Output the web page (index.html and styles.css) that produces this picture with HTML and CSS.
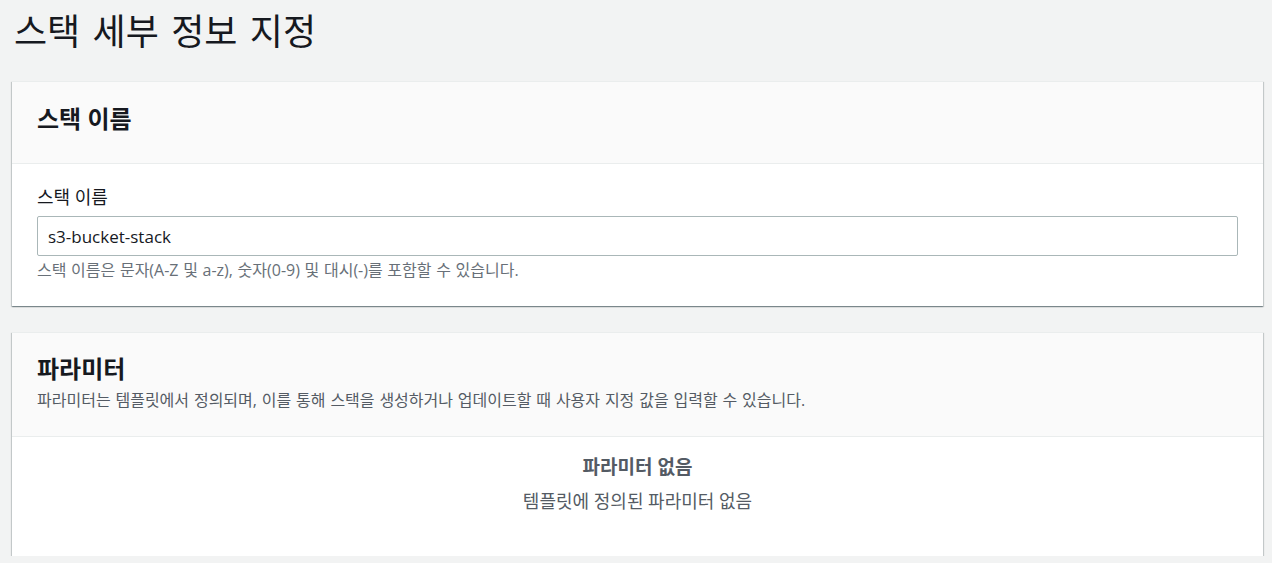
FILE: index.html
```html
<!DOCTYPE html>
<html lang="ko">
<head>
<meta charset="utf-8">
<title>스택 세부 정보 지정</title>
<link rel="stylesheet" href="styles.css">
</head>
<body>
<main class="page">
  <h1 class="page-title">스택 세부 정보 지정</h1>

  <div class="cards">
    <section class="card">
      <header class="card-header">
        <h2 class="card-title">스택 이름</h2>
      </header>
      <div class="card-body">
        <label class="field-label" for="stack-name">스택 이름</label>
        <input class="field-input" id="stack-name" type="text" value="s3-bucket-stack">
        <p class="field-help">스택 이름은 문자(A-Z 및 a-z), 숫자(0-9) 및 대시(-)를 포함할 수 있습니다.</p>
      </div>
    </section>

    <section class="card">
      <header class="card-header card-header--desc">
        <h2 class="card-title">파라미터</h2>
        <p class="card-desc">파라미터는 템플릿에서 정의되며, 이를 통해 스택을 생성하거나 업데이트할 때 사용자 지정 값을 입력할 수 있습니다.</p>
      </header>
      <div class="card-body card-body--empty">
        <p class="empty-title">파라미터 없음</p>
        <p class="empty-text">템플릿에 정의된 파라미터 없음</p>
      </div>
    </section>
  </div>
</main>
</body>
</html>
```

FILE: styles.css
```css
* { box-sizing: border-box; }

html, body {
  margin: 0;
  padding: 0;
  background: #f2f3f3;
}

body {
  font-family: "Open Sans", "Noto Sans CJK KR", sans-serif;
  color: #16191f;
}

.page {
  padding: 0 9px 0 12px;
}

.page-title {
  margin: 0 0 25px;
  padding: 8px 0 0 2px;
  font-size: 36px;
  font-weight: 400;
  line-height: 48px;
  word-spacing: 3px;
  color: #16191f;
}

.cards {
  display: flex;
  flex-direction: column;
  gap: 26px;
}

.card {
  background: #fff;
  border-top: 1px solid #eaeded;
  box-shadow: 0 1px 1px 0 rgba(0, 28, 36, 0.3), 1px 1px 1px 0 rgba(0, 28, 36, 0.15), -1px 1px 1px 0 rgba(0, 28, 36, 0.15);
}

.card-header {
  background: #fafafa;
  border-bottom: 1px solid #eaeded;
  padding: 21px 25px 28px;
}

.card-header--desc {
  padding: 20px 25px 25px;
}

.card-title {
  margin: 0;
  font-size: 24px;
  font-weight: 700;
  line-height: 32px;
  color: #16191f;
}

.card-desc {
  margin: 4px 0 0;
  font-size: 16px;
  line-height: 22px;
  word-spacing: 0.7px;
  color: #545b64;
}

.card-body {
  padding: 21px 25px 25px;
}

.field-label {
  display: block;
  font-size: 18px;
  line-height: 24px;
  color: #16191f;
  margin-bottom: 7px;
}

.field-input {
  display: block;
  width: 100%;
  height: 40px;
  margin: 0;
  border: 1px solid #aab7b8;
  border-radius: 2px;
  padding: 0 10px;
  font-family: "Open Sans", "Noto Sans CJK KR", sans-serif;
  font-size: 17px;
  color: #16191f;
  background: #fff;
  outline: none;
}

.field-help {
  margin: 3px 0 0;
  font-size: 16px;
  line-height: 22px;
  word-spacing: 0.5px;
  color: #687078;
}

.card-body--empty {
  padding: 17px 25px 42px;
  text-align: center;
}

.empty-title {
  margin: 0;
  font-size: 19px;
  font-weight: 700;
  line-height: 26px;
  color: #545b64;
}

.empty-text {
  margin: 8px 0 0;
  font-size: 18px;
  line-height: 26px;
  color: #545b64;
}
```
